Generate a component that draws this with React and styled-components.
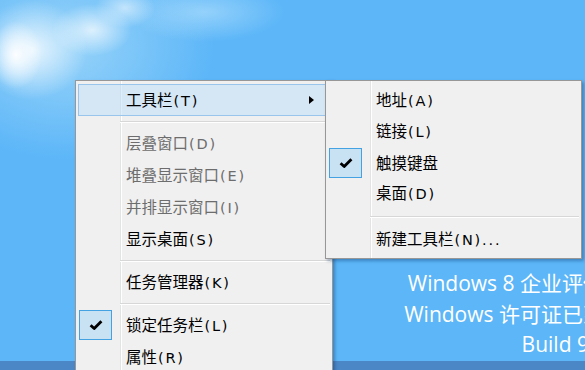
import React from 'react'
import styled, { createGlobalStyle } from 'styled-components'

const GlobalStyle = createGlobalStyle`
    html, body {
        margin: 0;
        padding: 0;
        overflow: hidden;
    }
`

const Desktop = styled.div`
    position: relative;
    width: 585px;
    height: 370px;
    overflow: hidden;
    display: flex;
    flex-direction: column;
    font-family: 'Noto Sans CJK SC', sans-serif;
`

const Wallpaper = styled.div`
    flex: 1;
    background:
        radial-gradient(ellipse 26px 34px at 16px 55px, rgba(255, 255, 255, 0.95), rgba(255, 255, 255, 0) 100%),
        radial-gradient(ellipse 55px 50px at 32px 50px, rgba(255, 255, 255, 0.8), rgba(255, 255, 255, 0) 100%),
        radial-gradient(ellipse 40px 26px at 92px 30px, rgba(255, 255, 255, 0.7), rgba(255, 255, 255, 0) 100%),
        radial-gradient(ellipse 30px 20px at 125px 8px, rgba(255, 255, 255, 0.55), rgba(255, 255, 255, 0) 100%),
        radial-gradient(ellipse 80px 30px at 205px 12px, rgba(215, 242, 255, 0.45), rgba(255, 255, 255, 0) 100%),
        radial-gradient(ellipse 150px 115px at 65px 45px, rgba(185, 228, 250, 0.65), rgba(185, 228, 250, 0) 100%),
        #5cb6f8;
`

const Taskbar = styled.div`
    height: 9px;
    background: #4b87c6;
`

const Watermark = styled.div`
    position: absolute;
    right: -40px;
    top: 268px;
    color: #ffffff;
    font-family: 'Open Sans', 'Noto Sans CJK SC', sans-serif;
    font-size: 21px;
    line-height: 30.5px;
    text-align: right;
    white-space: nowrap;
`

const Menu = styled.div`
    position: absolute;
    left: ${(p) => p.$left}px;
    top: ${(p) => p.$top}px;
    width: ${(p) => p.$width}px;
    box-sizing: border-box;
    padding: 3px 2px;
    border: 1px solid #979797;
    background:
        linear-gradient(
            to right,
            transparent 44px,
            #e2e3e3 44px,
            #e2e3e3 45px,
            #ffffff 45px,
            #ffffff 46px,
            transparent 46px
        ),
        #f0f0f0;
    box-shadow: 2px 2px 3px rgba(0, 40, 90, 0.35);
    font-size: 15.5px;
`

const Item = styled.div`
    display: grid;
    grid-template-columns: 47px 1fr 20px;
    align-items: center;
    height: ${(p) => p.$height || 32}px;
    box-sizing: border-box;
    border: 1px solid ${(p) => (p.$active ? '#99c5ec' : 'transparent')};
    background: ${(p) => (p.$active ? 'rgba(186, 220, 250, 0.5)' : 'transparent')};
    color: ${(p) => (p.$disabled ? '#6d6d6d' : '#000000')};
    white-space: nowrap;
`

const Gutter = styled.span`
    display: flex;
    align-items: center;
    height: 100%;
`

const CheckBox = styled.span`
    display: flex;
    align-items: center;
    justify-content: center;
    width: 33px;
    height: 30px;
    box-sizing: border-box;
    border: 1px solid #45a2e2;
    background: #c8e1f3;
`

const Label = styled.span`
    line-height: 1;
`

const Hotkey = styled.span`
    font-family: 'DejaVu Sans', sans-serif;
    font-size: 14.5px;
    letter-spacing: 1.8px;
    margin-left: 1px;
`

const Arrow = styled.span`
    width: 0;
    height: 0;
    border-left: 5px solid #000000;
    border-top: 4.5px solid transparent;
    border-bottom: 4.5px solid transparent;
`

const Separator = styled.div`
    height: ${(p) => p.$height || 11}px;
    display: flex;
    align-items: center;
    padding-left: 42px;

    &::before {
        content: '';
        flex: 1;
        height: 1px;
        background: #d7d7d7;
        box-shadow: 0 1px 0 #ffffff;
    }
`

const Check = () => (
    <svg width="14" height="12" viewBox="0 0 14 12">
        <path d="M1.6 6.2 L5.2 9.6 L12.4 2.2" fill="none" stroke="#000" strokeWidth="2.8" strokeLinejoin="round" />
    </svg>
)

const MenuRow = ({ label, hotkey, checked, active, disabled, submenu, height }) => (
    <Item $active={active} $disabled={disabled} $height={height}>
        <Gutter>
            {checked && (
                <CheckBox>
                    <Check />
                </CheckBox>
            )}
        </Gutter>
        <Label>
            {label}
            {hotkey && <Hotkey>{hotkey}</Hotkey>}
        </Label>
        {submenu ? <Arrow /> : <span />}
    </Item>
)

const App = () => (
    <>
        <GlobalStyle />
        <Desktop>
            <Wallpaper />
            <Taskbar />
            <Watermark>
                <div>Windows 8 企业评估版</div>
                <div>Windows 许可证已到期</div>
                <div>Build 9200</div>
            </Watermark>
            <Menu $left={75} $top={80} $width={258}>
                <MenuRow label="工具栏" hotkey="(T)" active submenu />
                <Separator />
                <MenuRow label="层叠窗口" hotkey="(D)" disabled />
                <MenuRow label="堆叠显示窗口" hotkey="(E)" disabled />
                <MenuRow label="并排显示窗口" hotkey="(I)" disabled />
                <MenuRow label="显示桌面" hotkey="(S)" />
                <Separator />
                <MenuRow label="任务管理器" hotkey="(K)" />
                <Separator />
                <MenuRow label="锁定任务栏" hotkey="(L)" checked />
                <MenuRow label="属性" hotkey="(R)" />
            </Menu>
            <Menu $left={325} $top={80} $width={257}>
                <MenuRow label="地址" hotkey="(A)" />
                <MenuRow label="链接" hotkey="(L)" height={31} />
                <MenuRow label="触摸键盘" checked height={31} />
                <MenuRow label="桌面" hotkey="(D)" height={31} />
                <Separator $height={14} />
                <MenuRow label="新建工具栏" hotkey="(N)..." />
            </Menu>
        </Desktop>
    </>
)

export default App
